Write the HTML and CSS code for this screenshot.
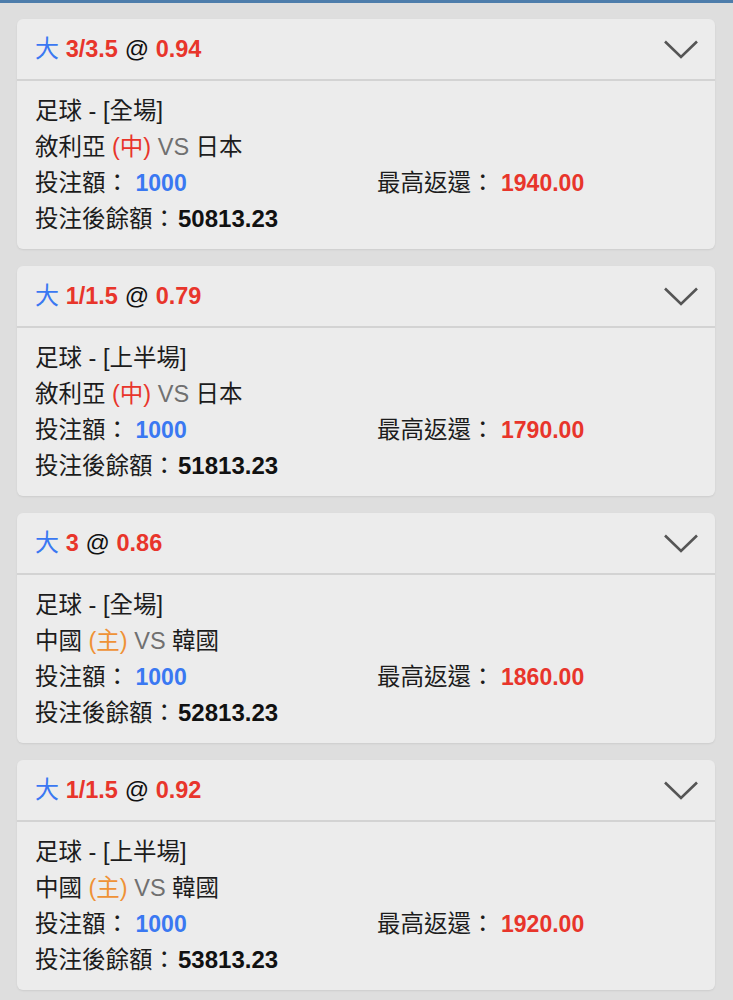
FILE: index.html
```html
<!DOCTYPE html>
<html lang="zh-Hant">
<head>
    <meta charset="UTF-8">
    <meta name="viewport" content="width=device-width, initial-scale=1.0">
    <title>注單</title>
    <link rel="stylesheet" href="styles.css">
</head>
<body>
    <div class="top-bar"></div>

    <main class="bet-list">
        <div class="bet-card">
            <div class="bet-head">
                <div class="bet-title">
                    <span class="blue">大</span> <b class="red">3/3.5</b> <span class="at">@</span> <b class="red">0.94</b>
                </div>
                <svg class="chevron" width="34" height="19" viewBox="0 0 34 19"><path d="M1 1.5 L17 17 L33 1.5" /></svg>
            </div>
            <div class="bet-body">
                <div class="row">足球 - [全場]</div>
                <div class="row">敘利亞 <span class="tag-red">(中)</span> <span class="vs">VS</span> 日本</div>
                <div class="row split">
                    <div>投注額： <b class="num blue">1000</b></div>
                    <div>最高返還： <b class="num red">1940.00</b></div>
                </div>
                <div class="row">投注後餘額：<b class="num balance">50813.23</b></div>
            </div>
        </div>

        <div class="bet-card">
            <div class="bet-head">
                <div class="bet-title">
                    <span class="blue">大</span> <b class="red">1/1.5</b> <span class="at">@</span> <b class="red">0.79</b>
                </div>
                <svg class="chevron" width="34" height="19" viewBox="0 0 34 19"><path d="M1 1.5 L17 17 L33 1.5" /></svg>
            </div>
            <div class="bet-body">
                <div class="row">足球 - [上半場]</div>
                <div class="row">敘利亞 <span class="tag-red">(中)</span> <span class="vs">VS</span> 日本</div>
                <div class="row split">
                    <div>投注額： <b class="num blue">1000</b></div>
                    <div>最高返還： <b class="num red">1790.00</b></div>
                </div>
                <div class="row">投注後餘額：<b class="num balance">51813.23</b></div>
            </div>
        </div>

        <div class="bet-card">
            <div class="bet-head">
                <div class="bet-title">
                    <span class="blue">大</span> <b class="red">3</b> <span class="at">@</span> <b class="red">0.86</b>
                </div>
                <svg class="chevron" width="34" height="19" viewBox="0 0 34 19"><path d="M1 1.5 L17 17 L33 1.5" /></svg>
            </div>
            <div class="bet-body">
                <div class="row">足球 - [全場]</div>
                <div class="row">中國 <span class="tag-orange">(主)</span> <span class="vs">VS</span> 韓國</div>
                <div class="row split">
                    <div>投注額： <b class="num blue">1000</b></div>
                    <div>最高返還： <b class="num red">1860.00</b></div>
                </div>
                <div class="row">投注後餘額：<b class="num balance">52813.23</b></div>
            </div>
        </div>

        <div class="bet-card">
            <div class="bet-head">
                <div class="bet-title">
                    <span class="blue">大</span> <b class="red">1/1.5</b> <span class="at">@</span> <b class="red">0.92</b>
                </div>
                <svg class="chevron" width="34" height="19" viewBox="0 0 34 19"><path d="M1 1.5 L17 17 L33 1.5" /></svg>
            </div>
            <div class="bet-body">
                <div class="row">足球 - [上半場]</div>
                <div class="row">中國 <span class="tag-orange">(主)</span> <span class="vs">VS</span> 韓國</div>
                <div class="row split">
                    <div>投注額： <b class="num blue">1000</b></div>
                    <div>最高返還： <b class="num red">1920.00</b></div>
                </div>
                <div class="row">投注後餘額：<b class="num balance">53813.23</b></div>
            </div>
        </div>
    </main>
</body>
</html>
```

FILE: styles.css
```css
body {
    font-family: 'Liberation Sans', 'Noto Sans CJK TC', sans-serif;
    background-color: #dedede;
    color: #1c1c1c;
    margin: 0;
    padding: 0;
}

.top-bar {
    height: 3px;
    background-color: #4d7dab;
}

.bet-list {
    display: flex;
    flex-direction: column;
    gap: 17px;
    padding: 16px 18px 20px 17px;
}

.bet-card {
    background-color: #ececec;
    border-radius: 6px;
    box-shadow: 0 1px 2px rgba(0, 0, 0, 0.08);
}

.bet-head {
    height: 60px;
    display: flex;
    align-items: center;
    justify-content: space-between;
    padding: 0 17px 0 18px;
    border-bottom: 2px solid #d3d3d3;
    font-size: 24px;
}

.bet-title {
    padding-bottom: 5px;
}

.bet-title b {
    font-weight: bold;
    font-size: 23.5px;
}

.at {
    color: #111111;
}

.chevron path {
    fill: none;
    stroke: #555555;
    stroke-width: 2.6;
}

.bet-body {
    padding: 12px 18px;
    font-size: 23.5px;
}

.row {
    height: 36px;
    line-height: 36px;
    white-space: nowrap;
}

.split {
    display: grid;
    grid-template-columns: 342px 1fr;
}

.num {
    font-size: 23px;
    font-weight: bold;
    color: #111111;
}

.balance {
    font-size: 24px;
    margin-left: 2px;
}

.blue {
    color: #3a78f2;
}

.red {
    color: #e8352b;
}

.num.blue {
    color: #3a78f2;
}

.num.red {
    color: #e8352b;
}

.tag-red {
    color: #e8352b;
}

.tag-orange {
    color: #ef9236;
}

.vs {
    color: #707070;
}
```
